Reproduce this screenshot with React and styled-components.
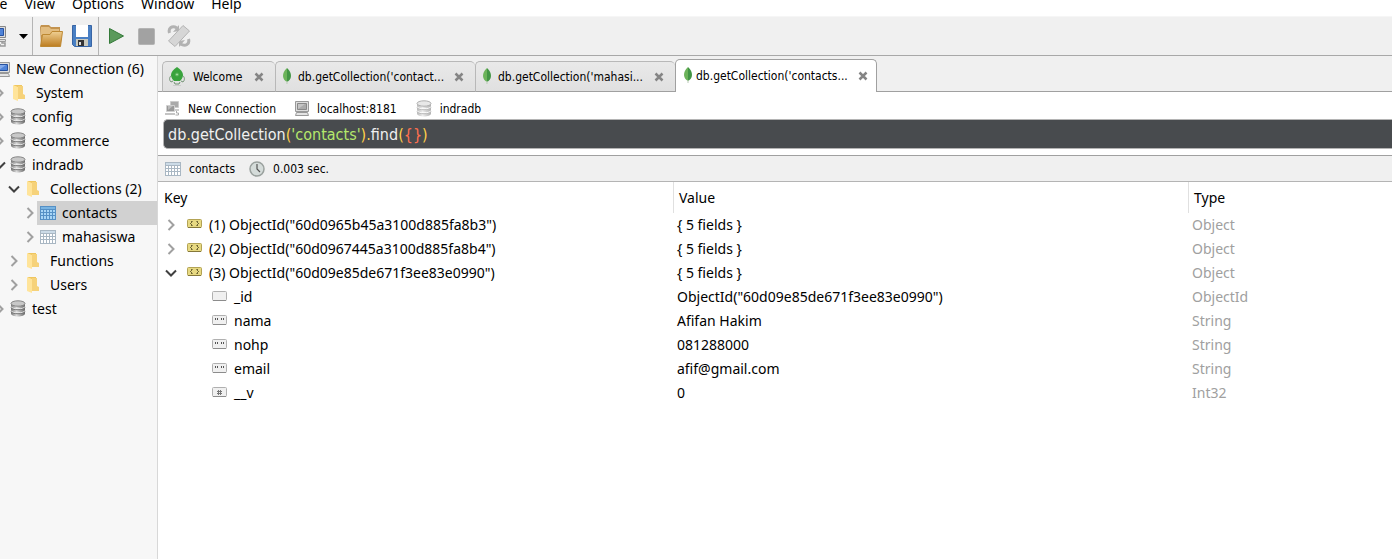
import React, { useState } from 'react';
import styled, { createGlobalStyle, css } from 'styled-components';

const GlobalStyle = createGlobalStyle`
  * {
    box-sizing: border-box;
  }
  body {
    margin: 0;
    overflow: hidden;
    background: #fff;
    color: #000;
    font: 14px/24px 'Noto Sans', 'Open Sans', sans-serif;
  }
  button {
    border: 0;
    padding: 0;
    background: none;
    font: inherit;
    color: inherit;
  }
  svg {
    display: block;
    flex: none;
  }
`;

const Window = styled.div`
  min-height: 100vh;
  display: flex;
  flex-direction: column;
`;

const MenuBar = styled.nav`
  display: flex;
  gap: 17px;
  height: 16px;
  margin-left: -15px;
  line-height: 8px;
`;

const MenuItem = styled.button`
  height: 8px;
`;

const Toolbar = styled.div`
  display: flex;
  height: 40px;
  background: #f0f0f0;
  border-top: 1px solid #f6f6f6;
  border-bottom: 1px solid #a8a8a8;
`;

const ToolGroup = styled.div`
  display: flex;
  align-items: center;
  gap: 12px;
  padding: 0 9px;
  & + & {
    border-left: 1px solid #b4b4b4;
  }
  &:first-child {
    padding: 0 4px 0 0;
    margin-left: -15px;
  }
  &:nth-child(2) {
    gap: 8px;
    padding: 0 5px 0 6px;
  }
`;

const Body = styled.div`
  display: flex;
  flex: 1;
`;

const Tree = styled.ul`
  width: 157px;
  flex: none;
  margin: 0;
  padding: 1px 0;
  list-style: none;
  background: #f7f7f7;
`;

const TreeRow = styled.li`
  display: flex;
  height: 24px;
  align-items: center;
  padding-left: ${({ level }) => [0, 0, 6, 22][level]}px;
`;

const Arrow = styled.button`
  width: 15px;
  height: 24px;
  flex: none;
  display: flex;
  align-items: center;
  justify-content: center;
  ${({ clipped }) =>
    clipped &&
    css`
      margin-left: -8px;
    `}
`;

const TreeLabel = styled.button`
  display: flex;
  flex: 1;
  height: 24px;
  align-items: center;
  gap: ${({ wide }) => (wide ? 10 : 6)}px;
  padding-left: ${({ wide }) => (wide ? 6 : 3)}px;
  white-space: nowrap;
  background: ${({ selected }) => (selected ? '#d1d1d1' : 'none')};
  ${({ root }) =>
    root &&
    css`
      padding-left: 0;
      margin-left: -4px;
    `}
`;

const Main = styled.main`
  flex: 1;
  min-width: 0;
  border-left: 1px solid #d8d8d8;
`;

const Tabs = styled.div`
  display: flex;
  align-items: flex-end;
  height: 36px;
  padding-left: 4px;
  background: linear-gradient(#a0a0a0, #a0a0a0) bottom / 100% 1px no-repeat #f0f0f0;
  font: 12px/16px 'DejaVu Sans Condensed', 'DejaVu Sans', sans-serif;
`;

const Tab = styled.div`
  display: flex;
  align-items: center;
  gap: 9px;
  width: ${({ short }) => (short ? 113 : 200)}px;
  height: 31px;
  padding: 0 11px 0 6px;
  border: 1px solid #b8b8b8;
  border-right: 0;
  border-bottom-color: #a0a0a0;
  border-radius: 5px 5px 0 0;
  background: linear-gradient(#e9e9e9, #e0e0e0);
  ${({ active }) =>
    active &&
    css`
      width: 202px;
      height: 33px;
      border: 1px solid #a0a0a0;
      border-bottom: 0;
      padding: 0 8px 1px 7px;
      background: #fff;
    `}
`;

const TabTitle = styled.button`
  display: flex;
  align-items: center;
  flex: 1;
  gap: ${({ short, active }) => (short ? 8 : active ? 3 : 6)}px;
  white-space: nowrap;
`;

const InfoBar = styled.div`
  display: flex;
  align-items: center;
  gap: 19px;
  height: 27px;
  padding: 6px 7px 0;
  font: 12px/16px 'DejaVu Sans Condensed', 'DejaVu Sans', sans-serif;
  ${({ result }) =>
    result &&
    css`
      gap: 14px;
      height: 26px;
      padding-top: 0;
      background: #f0f0f0;
      border-top: 1px solid #a0a0a0;
    `}
`;

const Info = styled.span`
  display: flex;
  align-items: center;
  gap: 8px;
`;

const Query = styled.div`
  height: 30px;
  margin: 0 0 6px 5px;
  padding: 0 4px;
  border: 1px solid #b4b4b4;
  border-right: 0;
  border-radius: 5px 0 0 5px;
  background: #484b4e;
  color: #f0f0f0;
  font: 16px/30px 'DejaVu Sans Condensed', 'DejaVu Sans', sans-serif;
`;

const Token = styled.span`
  color: ${({ kind }) =>
    ({ paren: '#ffd04a', string: '#b5e86c', brace: '#ff7050' })[kind]};
`;

const Results = styled.table`
  width: 100%;
  table-layout: fixed;
  border-collapse: separate;
  border-spacing: 0;
  border-top: 1px solid #b4b4b4;
`;

const Head = styled.th`
  width: ${({ last }) => (last ? 'auto' : '515px')};
  height: 31px;
  padding: 0 5px;
  text-align: left;
  font-weight: normal;
  &:first-child {
    padding-left: 6px;
  }
  & + & {
    border-left: 1px solid #e0e0e0;
  }
`;

const Cell = styled.td`
  height: 24px;
  padding: 0 4px;
  white-space: nowrap;
  color: ${({ muted }) => (muted ? '#a0a0a0' : '#000')};
`;

const Key = styled.div`
  display: flex;
  align-items: center;
  gap: 7px;
  padding-left: ${({ child }) => (child ? 50 : 1)}px;
  ${Arrow} {
    margin-right: 2px;
  }
`;

const Chevron = ({ open }) => (
  <svg width="12" height="12" viewBox="0 0 12 12" fill="none" strokeWidth="2">
    {open ? (
      <path d="M1 3.5 6 8.5 11 3.5" stroke="#404040" />
    ) : (
      <path d="M3.5 1 8.5 6 3.5 11" stroke="#a0a0a0" />
    )}
  </svg>
);

const Folder = () => (
  <svg width="13" height="18" viewBox="0 0 13 18">
    <path d="M1 1h8v14H2z" fill="#efc65f" />
    <path d="M5 2h5v8l2 1v4H5z" fill="#f6d27a" />
    <path d="M0 1l5 2v14l-5-2z" fill="#ffe49a" />
  </svg>
);

const Database = ({ pale }) => (
  <svg width="16" height="18" viewBox="0 0 16 18">
    <defs>
      <linearGradient id={pale ? 'dbPale' : 'db'}>
        <stop stopColor={pale ? '#b8b8b8' : '#777'} />
        <stop offset=".4" stopColor={pale ? '#eee' : '#ddd'} />
        <stop offset="1" stopColor={pale ? '#b0b0b0' : '#686868'} />
      </linearGradient>
    </defs>
    <path
      d="M1 3.5v10c0 4 14 4 14 0v-10z"
      fill={pale ? 'url(#dbPale)' : 'url(#db)'}
    />
    <ellipse
      cx="8"
      cy="3.5"
      rx="7"
      ry="2.7"
      fill={pale ? '#e8e8e8' : '#c8c8c8'}
      stroke={pale ? '#b0b0b0' : '#858585'}
    />
    <path
      d="M1 6.5c0 3 14 3 14 0M1 10.5c0 3 14 3 14 0"
      fill="none"
      stroke={pale ? '#fff' : '#eee'}
    />
    <path
      d="M1 7.5c0 3 14 3 14 0M1 11.5c0 3 14 3 14 0"
      fill="none"
      stroke={pale ? '#bbb' : '#777'}
    />
  </svg>
);

const Grid = ({ blue }) => (
  <svg width="16" height="14" viewBox="0 0 16 14">
    <path d="M0 0h16v14H0z" fill={blue ? '#5590c5' : '#a9b7c3'} />
    <path d="M1 1h14v2H1z" fill={blue ? '#79b4e2' : '#ccdbe7'} />
    <path
      d="M1 4h2v2H1zm3 0h2v2H4zm3 0h2v2H7zm3 0h2v2h-2zm3 0h2v2h-2zM1 7h2v2H1zm3 0h2v2H4zm3 0h2v2H7zm3 0h2v2h-2zm3 0h2v2h-2zM1 10h2v3H1zm3 0h2v3H4zm3 0h2v3H7zm3 0h2v3h-2zm3 0h2v3h-2z"
      fill={blue ? '#a8d5f5' : '#fff'}
    />
  </svg>
);

const Computer = ({ blue }) => (
  <svg width="14" height="15" viewBox="0 0 14 15">
    <path d="M.5.5h13v10H.5z" fill="#ddd" stroke="#999" />
    <path
      d="M2.5 2.5h9v6h-9z"
      fill={blue ? '#4f83d8' : '#aaa'}
      stroke={blue ? '#2752a0' : '#888'}
    />
    <path d="M3 8l7-5H3z" fill={blue ? '#84aaea' : '#c5c5c5'} />
    <path d="M1.5 11.5h11l1 3H.5z" fill="#e4e4e4" stroke="#999" />
  </svg>
);

const Network = () => (
  <svg width="15" height="15" viewBox="0 0 15 15">
    <path d="M5.5.5h8v6h-8z" fill="#aaa" stroke="#ccc" />
    <path d="M8 8h6v2H8z" fill="#ccc" />
    <path d="M1.5 4.5h8v6h-8z" fill="#999" stroke="#d0d0d0" />
    <path d="M3 9l5-4H3z" fill="#bbb" />
    <path d="M0 12h10v2H0z" fill="#c4c4c4" />
    <path d="M11.5 10v2h2v2h-3" fill="none" stroke="#aaa" />
  </svg>
);

const Clock = () => (
  <svg width="16" height="16" viewBox="0 0 16 16">
    <circle cx="8" cy="8" r="7" fill="#d5dcda" stroke="#9aa19e" strokeWidth="1.5" />
    <path d="M8 3v5l3 3" fill="none" stroke="#555" strokeWidth="1.2" />
  </svg>
);

const Leaf = () => (
  <svg width="10" height="17" viewBox="0 0 10 17">
    <path d="M5 0C2 3 1 5 1 8c0 3 2 5 4 6z" fill="#6cb35a" />
    <path d="M5 0c3 3 4 5 4 8 0 3-2 5-4 6z" fill="#429545" />
    <path d="M5 13v3" stroke="#b9c9b4" />
  </svg>
);

const Rocket = () => (
  <svg width="16" height="20" viewBox="0 0 16 20">
    <path
      d="M3 8C0 10 0 13 2 15l2-1M13 8c3 2 3 5 1 7l-2-1M5 15l1 2h4l1-2"
      fill="none"
      stroke="#6f8f70"
    />
    <path
      d="M8 0C4 3 2 5 2 8c0 3 2 5 3 6h6c1-1 3-3 3-6 0-3-2-5-6-8z"
      fill="#39a33d"
    />
    <circle cx="8" cy="7.5" r="1.6" fill="#9fdc9d" stroke="#4fae50" />
    <path d="M4 18.500h8" stroke="#ccc" />
  </svg>
);

const Close = () => (
  <svg width="10" height="10" viewBox="0 0 10 10">
    <path d="M1.500 1.500l7 7m0-7l-7 7" stroke="#858585" strokeWidth="2.500" />
  </svg>
);

const ConnectIcon = () => (
  <svg width="22" height="24" viewBox="0 0 22 24">
    <path d="M4.500 2.500h16v11h-16z" fill="#ddd" stroke="#888" />
    <path d="M6.500 4.500h12v7h-12z" fill="#4f83d8" stroke="#2752a0" />
    <path d="M8 15.500h12.500v2H8z" fill="#e0e0e0" stroke="#999" />
    <path d="M17 17v2h3v3h-5v-2" fill="none" stroke="#999" strokeWidth="1.500" />
  </svg>
);

const OpenIcon = () => (
  <svg width="24" height="24" viewBox="0 0 24 24">
    <defs>
      <linearGradient id="flap" x2="0" y2="1">
        <stop stopColor="#efcf92" />
        <stop offset="1" stopColor="#bd7d20" />
      </linearGradient>
    </defs>
    <path d="M1 3l1-2h8l2 2h9v19H2z" fill="#c3934f" />
    <path d="M2 3h8l2 2h8v6H2z" fill="#e3bd80" />
    <path d="M1.500 22.500l2-12H11l2-3h10.500l-2 15z" fill="url(#flap)" stroke="#bd8832" />
  </svg>
);

const SaveIcon = () => (
  <svg width="22" height="24" viewBox="0 0 22 24">
    <path d="M1.500 1.500h19v21h-17l-2-2z" fill="#497fc3" stroke="#3865a5" />
    <path d="M5 1h12v12H5z" fill="#fff" />
    <path d="M5 15h12v7H5z" fill="#c9c9bd" />
    <path d="M7 16h6v6H7z" fill="#333" />
    <path d="M8 18h2v3H8z" fill="#ddd" />
  </svg>
);

const PlayIcon = () => (
  <svg width="18" height="20" viewBox="0 0 18 20">
    <path
      d="M1.500 2.500L15.500 10 1.500 17.500z"
      fill="#5a9a5b"
      stroke="#347a39"
      strokeLinejoin="round"
    />
  </svg>
);

const StopIcon = () => (
  <svg width="17" height="17" viewBox="0 0 17 17">
    <rect x=".5" y=".5" width="16" height="16" rx="1" fill="#a2a2a2" stroke="#b4b4b4" />
  </svg>
);

const RotateIcon = () => (
  <svg width="24" height="24" viewBox="0 0 24 24">
    <path
      d="M2.500 9C1 4 5 1 10 4M21.500 15c1.500 5-3 8-8 5"
      fill="none"
      stroke="#b2b2b2"
      strokeWidth="3"
    />
    <path d="M6 8l6-1V1zM18 16l-6 1v6z" fill="#b2b2b2" />
    <path d="M1.500 17L16 1.500 22.500 7 8 22.500z" fill="#d6d6d6" stroke="#b4b4b4" />
  </svg>
);

const TypeIcon = ({ type }) => {
  const object = type === 'Object';
  return (
    <svg width="15" height="12" viewBox="0 0 15 12" fill="none">
      <rect
        x=".5"
        y=".5"
        width="14"
        height={object ? 8 : 9}
        rx="1"
        fill={object ? '#e7d982' : '#f0f0f0'}
        stroke={object ? '#b3a355' : '#b0b0b0'}
      />
      <path
        d={object ? 'M1 8.500h13' : 'M1 9.500h13'}
        stroke={object ? '#85783a' : '#8c8c8c'}
      />
      {object && (
        <path
          d="M5.500 2.500h-1v1l-1 1 1 1v1h1M9.500 2.500h1v1l1 1-1 1v1h-1"
          stroke="#4a421d"
        />
      )}
      {type === 'String' && (
        <path d="M3.500 3v2M5.500 3v2M9.500 3v2M11.500 3v2" stroke="#555" />
      )}
      {type === 'Int32' && (
        <path d="M6.500 3v5M8.500 3v5M5 4.500h5M5 6.500h5" stroke="#777" />
      )}
    </svg>
  );
};

const icons = {
  computer: <Computer blue />,
  folder: <Folder />,
  database: <Database />,
  grid: <Grid />,
  gridBlue: <Grid blue />,
};

const tree = [
  { label: 'New Connection (6)', icon: 'computer', level: 0 },
  { label: 'System', icon: 'folder', level: 1 },
  { label: 'config', icon: 'database', level: 1 },
  { label: 'ecommerce', icon: 'database', level: 1 },
  { label: 'indradb', icon: 'database', level: 1, open: true },
  { label: 'Collections (2)', icon: 'folder', level: 2, open: true },
  { label: 'contacts', icon: 'gridBlue', level: 3 },
  { label: 'mahasiswa', icon: 'grid', level: 3 },
  { label: 'Functions', icon: 'folder', level: 2 },
  { label: 'Users', icon: 'folder', level: 2 },
  { label: 'test', icon: 'database', level: 1 },
];

const tabs = [
  'Welcome',
  "db.getCollection('contact...",
  "db.getCollection('mahasi...",
  "db.getCollection('contacts...",
];

const documents = [
  { key: '(1) ObjectId("60d0965b45a3100d885fa8b3")', value: '{ 5 fields }', type: 'Object' },
  { key: '(2) ObjectId("60d0967445a3100d885fa8b4")', value: '{ 5 fields }', type: 'Object' },
  {
    key: '(3) ObjectId("60d09e85de671f3ee83e0990")',
    value: '{ 5 fields }',
    type: 'Object',
    open: true,
  },
  { key: '_id', value: 'ObjectId("60d09e85de671f3ee83e0990")', type: 'ObjectId' },
  { key: 'nama', value: 'Afifan Hakim', type: 'String' },
  { key: 'nohp', value: '081288000', type: 'String' },
  { key: 'email', value: 'afif@gmail.com', type: 'String' },
  { key: '__v', value: '0', type: 'Int32' },
];

function App() {
  const [selected, setSelected] = useState('contacts');
  const [activeTab, setActiveTab] = useState(3);
  return (
    <Window>
      <GlobalStyle />
      <MenuBar>
        {['File', 'View', 'Options', 'Window', 'Help'].map((item) => (
          <MenuItem key={item}>{item}</MenuItem>
        ))}
      </MenuBar>
      <Toolbar>
        <ToolGroup>
          <button aria-label="Connect">
            <ConnectIcon />
          </button>
          <button aria-label="Connections">
            <svg width="9" height="5" viewBox="0 0 9 5">
              <path d="M0 0h9L4.500 5z" />
            </svg>
          </button>
        </ToolGroup>
        <ToolGroup>
          <button aria-label="Open">
            <OpenIcon />
          </button>
          <button aria-label="Save">
            <SaveIcon />
          </button>
        </ToolGroup>
        <ToolGroup>
          <button aria-label="Execute">
            <PlayIcon />
          </button>
          <button aria-label="Stop">
            <StopIcon />
          </button>
          <button aria-label="Rotate">
            <RotateIcon />
          </button>
        </ToolGroup>
      </Toolbar>
      <Body>
        <Tree>
          {tree.map(({ label, icon, level, open }) => (
            <TreeRow key={label} level={level}>
              {level > 0 && (
                <Arrow aria-label={`Toggle ${label}`} clipped={level < 2}>
                  <Chevron open={open} />
                </Arrow>
              )}
              <TreeLabel
                root={level === 0}
                wide={icon === 'folder'}
                selected={label === selected}
                onClick={() => setSelected(label)}
              >
                {icons[icon]}
                {label}
              </TreeLabel>
            </TreeRow>
          ))}
        </Tree>
        <Main>
          <Tabs>
            {tabs.map((title, i) => (
              <Tab key={title} short={i === 0} active={i === activeTab}>
                <TabTitle
                  short={i === 0}
                  active={i === activeTab}
                  onClick={() => setActiveTab(i)}
                >
                  {i === 0 ? <Rocket /> : <Leaf />}
                  {title}
                </TabTitle>
                <button aria-label={`Close ${title}`}>
                  <Close />
                </button>
              </Tab>
            ))}
          </Tabs>
          <InfoBar>
            <Info>
              <Network />
              New Connection
            </Info>
            <Info>
              <Computer />
              localhost:8181
            </Info>
            <Info>
              <Database pale />
              indradb
            </Info>
          </InfoBar>
          <Query>
            db<Token kind="paren">.</Token>getCollection<Token kind="paren">(</Token>
            <Token kind="string">&apos;contacts&apos;</Token>
            <Token kind="paren">).</Token>find<Token kind="paren">(</Token>
            <Token kind="brace">{'{}'}</Token>
            <Token kind="paren">)</Token>
          </Query>
          <InfoBar result>
            <Info>
              <Grid />
              contacts
            </Info>
            <Info>
              <Clock />
              0.003 sec.
            </Info>
          </InfoBar>
          <Results>
            <thead>
              <tr>
                <Head>Key</Head>
                <Head>Value</Head>
                <Head last>Type</Head>
              </tr>
            </thead>
            <tbody>
              {documents.map(({ key, value, type, open }) => (
                <tr key={key}>
                  <Cell>
                    <Key child={type !== 'Object'}>
                      {type === 'Object' && (
                        <Arrow aria-label="Toggle document">
                          <Chevron open={open} />
                        </Arrow>
                      )}
                      <TypeIcon type={type} />
                      {key}
                    </Key>
                  </Cell>
                  <Cell>{value}</Cell>
                  <Cell muted>{type}</Cell>
                </tr>
              ))}
            </tbody>
          </Results>
        </Main>
      </Body>
    </Window>
  );
}

export default App;
